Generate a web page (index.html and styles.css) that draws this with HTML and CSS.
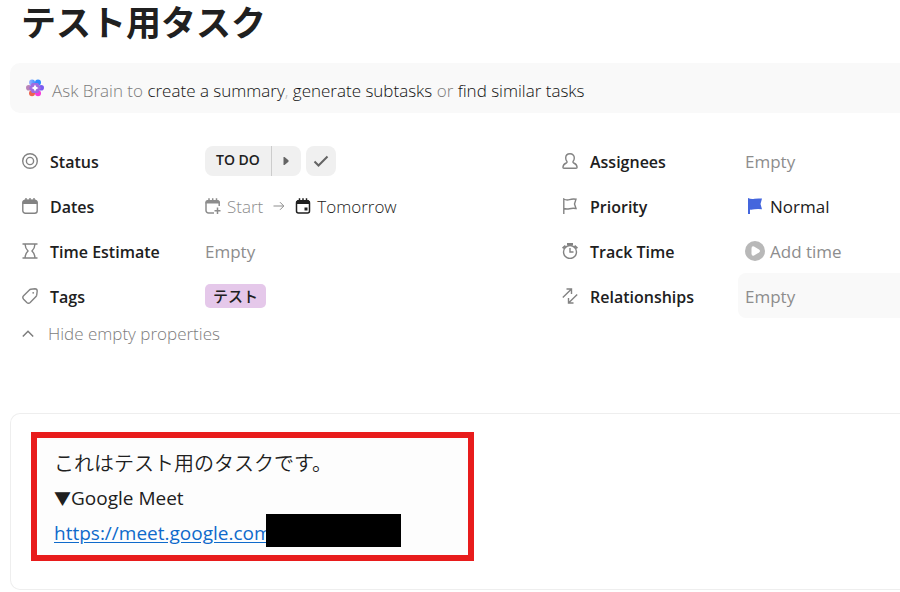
FILE: index.html
```html
<!DOCTYPE html>
<html lang="ja">
<head>
  <meta charset="UTF-8">
  <meta name="viewport" content="width=device-width, initial-scale=1">
  <title>テスト用タスク</title>
  <link rel="stylesheet" href="styles.css">
</head>

<body>

<main class="task">

  <h1>テスト用タスク</h1>

  <!-- Ask Brain bar -->
  <div class="brain">
    <svg class="brain-icon" viewBox="0 0 20 20" width="20" height="20" aria-hidden="true">
      <defs>
        <linearGradient id="petalTop" x1="0" y1="0" x2="1" y2="0">
          <stop offset="0" stop-color="#9db4ff"/>
          <stop offset="1" stop-color="#3f8fff"/>
        </linearGradient>
      </defs>
      <circle cx="3.800" cy="9.800" r="2.800" fill="#b983b8"/>
      <circle cx="16.200" cy="9.800" r="2.800" fill="#7a5cf0"/>
      <circle cx="7" cy="4.600" r="3" fill="url(#petalTop)"/>
      <circle cx="13" cy="4.600" r="3" fill="#2f8bff"/>
      <circle cx="7" cy="15.200" r="3" fill="#ee6450"/>
      <circle cx="13" cy="15.200" r="3" fill="#f43ad8"/>
      <path d="M4 10 7 5h6l3 5-3 5H7z" fill="#a06be0"/>
      <path d="M10 6.500 11.200 8.800 13.500 10l-2.300 1.200L10 13.500l-1.200-2.300L6.500 10l2.300-1.200z" fill="#fff"/>
    </svg>
    <p>Ask Brain to <a href="#">create a summary</a><span class="comma">,</span> <a href="#">generate subtasks</a> or <a href="#">find similar tasks</a></p>
  </div>

  <!-- Properties -->
  <div class="properties">
    <div class="column">
      <div class="property">
        <div class="name">
          <svg viewBox="0 0 16 16"><circle cx="8" cy="8" r="7.300"/><circle cx="8" cy="8" r="3.600"/></svg>
          <span>Status</span>
        </div>
        <div class="value status">
          <div class="split">
            <button type="button" class="todo">TO DO</button>
            <button type="button" class="next" aria-label="Next status">
              <svg viewBox="0 0 6 8"><path d="M.5 0h1L5.500 3.200v1.600L1.500 8h-1z"/></svg>
            </button>
          </div>
          <button type="button" class="done" aria-label="Mark complete">
            <svg viewBox="0 0 16 12"><path d="M1.500 6.500 5.500 10.500 14.500 1.500"/></svg>
          </button>
        </div>
      </div>

      <div class="property">
        <div class="name">
          <svg viewBox="0 0 16 16"><rect x=".8" y="2.500" width="14.400" height="12.700" rx="2.500"/><path class="fill" d="M.5 6V4l2-2.500h11l2 2.500v2z"/><path d="M4 0v2.500M8 0v2.500M12 0v2.500"/></svg>
          <span>Dates</span>
        </div>
        <div class="value dates">
          <button type="button" class="start">
            <svg viewBox="0 0 16 16"><path d="M9 15H3.500A2.500 2.500 0 0 1 1 12.500V4.500Q1 3 2.500 3H12.500Q14.200 3 14.200 4.500V8M12.500 9.500v6.500M9.500 12.700h6"/><path class="fill" d="M.5 5.500V4L2 2h11.200L15 4v1.500z"/><path d="M4 .2v2.300M7.700 .2v2.300M11.500 .2v2.300"/></svg>
            <span>Start</span>
          </button>
          <svg class="arrow" viewBox="0 0 12 10"><path d="M.5 5h10M7 1.200 10.800 5 7 8.800"/></svg>
          <button type="button" class="due">
            <svg viewBox="0 0 16 16"><rect x="1.500" y="3" width="13" height="12" rx="2"/><path class="fill" d="M1 6V4l1.500-2h11L15 4v2zM9.500 9.500h3v3h-3z"/><path d="M4.500 .2v2.300M8 .2v2.300M11.500 .2v2.300"/></svg>
            <span>Tomorrow</span>
          </button>
        </div>
      </div>

      <div class="property">
        <div class="name">
          <svg viewBox="0 0 16 16"><path d="M.5 1h15M.5 15h15M3 1Q3.300 5.500 6 8 3.300 10.500 3 15M13 1Q12.700 5.500 10 8 12.700 10.500 13 15"/></svg>
          <span>Time Estimate</span>
        </div>
        <div class="value"><span>Empty</span></div>
      </div>

      <div class="property">
        <div class="name">
          <svg viewBox="0 0 16 16"><path d="M8.800 1.300 13 .8Q15.200 .8 15.200 3L14.700 7.200Q14.500 8 14 8.600L8.200 14.400Q6.500 16 4.800 14.400L1.600 11.200Q0 9.500 1.600 7.800L7.400 2Q8 1.400 8.800 1.300Z"/><circle class="fill" cx="11.200" cy="4.800" r=".9"/></svg>
          <span>Tags</span>
        </div>
        <div class="value"><b class="tag">テスト</b></div>
      </div>
    </div>

    <div class="column">
      <div class="property">
        <div class="name">
          <svg viewBox="0 0 16 16"><path d="M8 .8C5.300 .8 3.700 2.700 3.700 5Q3.700 7 5 8.500Q5.300 9.600 4.300 10Q1.200 11.200 .9 14.200Q.9 15.200 2 15.200H14Q15.100 15.200 15.100 14.200Q14.800 11.200 11.700 10Q10.700 9.600 11 8.500Q12.300 7 12.300 5C12.300 2.700 10.700 .8 8 .8Z"/></svg>
          <span>Assignees</span>
        </div>
        <div class="value"><span>Empty</span></div>
      </div>

      <div class="property">
        <div class="name">
          <svg viewBox="0 0 16 16"><path d="M1.800 16V1Q4.500 2.500 7.500 1.600T14 1.200L12.500 6 14 10.500Q10.500 10 7.500 10.700T1.800 10.500"/></svg>
          <span>Priority</span>
        </div>
        <div class="value priority">
          <svg viewBox="0 0 16 16"><path d="M1 0Q4 1.500 7.500 .8T15 .6L13.500 6 15 11.300Q11 10.500 7.500 11.300T3 11.600V16H1z"/></svg>
          <span>Normal</span>
        </div>
      </div>

      <div class="property">
        <div class="name">
          <svg viewBox="0 0 16 16"><circle cx="8" cy="9" r="6.500"/><path d="M8 5V9h3.500"/><path d="M5 1h6M8 1v1.500M3.500 2.800.6 5.200M12.500 2.800l2.900 2.400" stroke-width="2"/></svg>
          <span>Track Time</span>
        </div>
        <div class="value add-time">
          <svg viewBox="0 0 20 20"><circle cx="10" cy="10" r="10"/><path d="M6.500 7.500Q6.500 4.500 9 5.400L14 8.500Q16 10 14 11.500L9 14.600Q6.500 15.500 6.500 12.500z"/></svg>
          <span>Add time</span>
        </div>
      </div>

      <div class="property">
        <div class="name">
          <svg viewBox="0 0 16 16"><path d="M.8 9.500 9.500 1M4.500 1h5v5M15.200 6.500 6.500 15M11.500 15h-5v-5"/></svg>
          <span>Relationships</span>
        </div>
        <div class="value hovered"><span>Empty</span></div>
      </div>
    </div>
  </div>

  <button type="button" class="toggle">
    <svg viewBox="0 0 12 8"><path d="M.8 6.500 6 1.300 11.200 6.500"/></svg>
    <span>Hide empty properties</span>
  </button>

  <!-- Description -->
  <section class="description">
    <div class="highlight">
      <p class="intro">これはテスト用のタスクです。</p>
      <p><span class="triangle">▼</span>Google Meet</p>
      <p class="meet"><a href="#">https://meet.google.com</a><span class="mask"></span></p>
    </div>
  </section>

</main>

</body>
</html>
```

FILE: styles.css
```css
* {
  box-sizing: border-box;
  padding: 0;
  margin: 0;
}

body {
  font-family: "Open Sans", "Noto Sans CJK JP", sans-serif;
  font-size: 17px;
  line-height: 24px;
  color: #202020;
  background: #fff;
  overflow-x: hidden;
}

button {
  font: inherit;
  color: inherit;
  background: none;
  border: none;
  cursor: pointer;
}

svg {
  flex: none;
  fill: none;
  stroke: currentColor;
}

h1 {
  padding: 0 21px;
  font-size: 35px;
  line-height: 46px;
  font-weight: 700;
}

/* Ask Brain */
.brain {
  display: flex;
  align-items: center;
  gap: 7px;
  height: 50px;
  margin: 17px 0 0 10px;
  padding: 6px 15px 0;
  border-radius: 10px 0 0 10px;
  background: #f9f9f9;
  color: #7c7c7c;
  font-weight: 325;
}

.brain-icon {
  stroke: none;
  margin-bottom: 7px;
}

.brain a {
  color: #111;
  text-decoration: none;
}

.comma {
  color: #bbb;
}

/* Properties */
.properties {
  display: grid;
  grid-template-columns: 3fr 2fr;
  margin-top: 25px;
}

.property {
  display: grid;
  grid-template-columns: 176px 1fr;
  height: 45px;
  padding-left: 22px;
}

.name {
  display: flex;
  align-items: center;
  gap: 12px;
  font-size: 16px;
  font-weight: 600;
}

.name span,
.value span {
  padding-top: 2px;
}

.name svg {
  width: 16px;
  height: 16px;
  color: #838383;
  stroke-width: 1.4;
}

.fill {
  fill: currentColor;
  stroke: none;
}

.value {
  display: flex;
  align-items: center;
  padding-left: 7px;
  color: #8d8d8d;
}

.hovered {
  background: #f9f9f9;
  border-radius: 8px 0 0 8px;
}

.status {
  gap: 5px;
  color: #202020;
}

.split {
  display: flex;
  height: 30px;
  border-radius: 8px;
  background: #f0f0f0;
}

.todo {
  padding: 0 11px 1px;
  font-size: 14px;
  font-weight: 600;
}

.next {
  display: flex;
  align-items: center;
  justify-content: center;
  width: 30px;
  border-left: 1px solid #ccc;
}

.next svg {
  width: 6px;
  height: 8px;
  fill: #646464;
  stroke: none;
}

.done {
  display: flex;
  align-items: center;
  justify-content: center;
  width: 30px;
  height: 30px;
  border-radius: 8px;
  background: #f0f0f0;
  color: #646464;
}

.done svg {
  width: 16px;
  height: 12px;
  stroke-width: 2;
}

.dates {
  gap: 10px;
  font-weight: 350;
}

.start,
.due {
  display: flex;
  align-items: center;
  gap: 6px;
}

.dates button svg {
  width: 16px;
  height: 16px;
  stroke-width: 1.5;
}

.due {
  color: #202020;
}

.arrow {
  width: 12px;
  height: 10px;
}

.tag {
  padding: 0 8px;
  border-radius: 5px;
  background: #e5c8ea;
  color: #202020;
  font-size: 15px;
  font-weight: 500;
}

.priority {
  gap: 7px;
  color: #202020;
}

.priority svg {
  width: 16px;
  height: 16px;
  margin-left: 2px;
  fill: #4466dd;
  stroke: none;
}

.add-time {
  gap: 5px;
}

.add-time svg {
  width: 20px;
  height: 20px;
  stroke: none;
}

.add-time circle {
  fill: #b8b8b8;
}

.add-time path {
  fill: #fff;
}

.toggle {
  display: flex;
  align-items: center;
  gap: 14px;
  margin: 3px 0 0 22px;
  color: #7c7c7c;
  font-weight: 325;
}

.toggle svg {
  width: 12px;
  height: 8px;
  stroke-width: 1.5;
}

.toggle span {
  padding-top: 1px;
}

/* Description */
.description {
  margin: 67px 0 0 10px;
  padding: 18px 20px 28px;
  border: 1px solid #eee;
  border-right: none;
  border-radius: 10px 0 0 10px;
}

.highlight {
  max-width: 443px;
  padding: 8px 17px 4px;
  border: 6px solid #e81c1c;
  background: #fdfdfd;
  font-size: 19px;
  line-height: 35px;
}

.intro {
  font-size: 20px;
  font-weight: 350;
}

.triangle {
  font-size: 17px;
}

.meet {
  position: relative;
}

.meet a {
  color: #0f6acb;
  text-underline-offset: 2px;
}

/* black bar over the meeting code */
.mask {
  position: absolute;
  left: 212px;
  top: -2px;
  width: 135px;
  height: 33px;
  background: #000;
}
```
